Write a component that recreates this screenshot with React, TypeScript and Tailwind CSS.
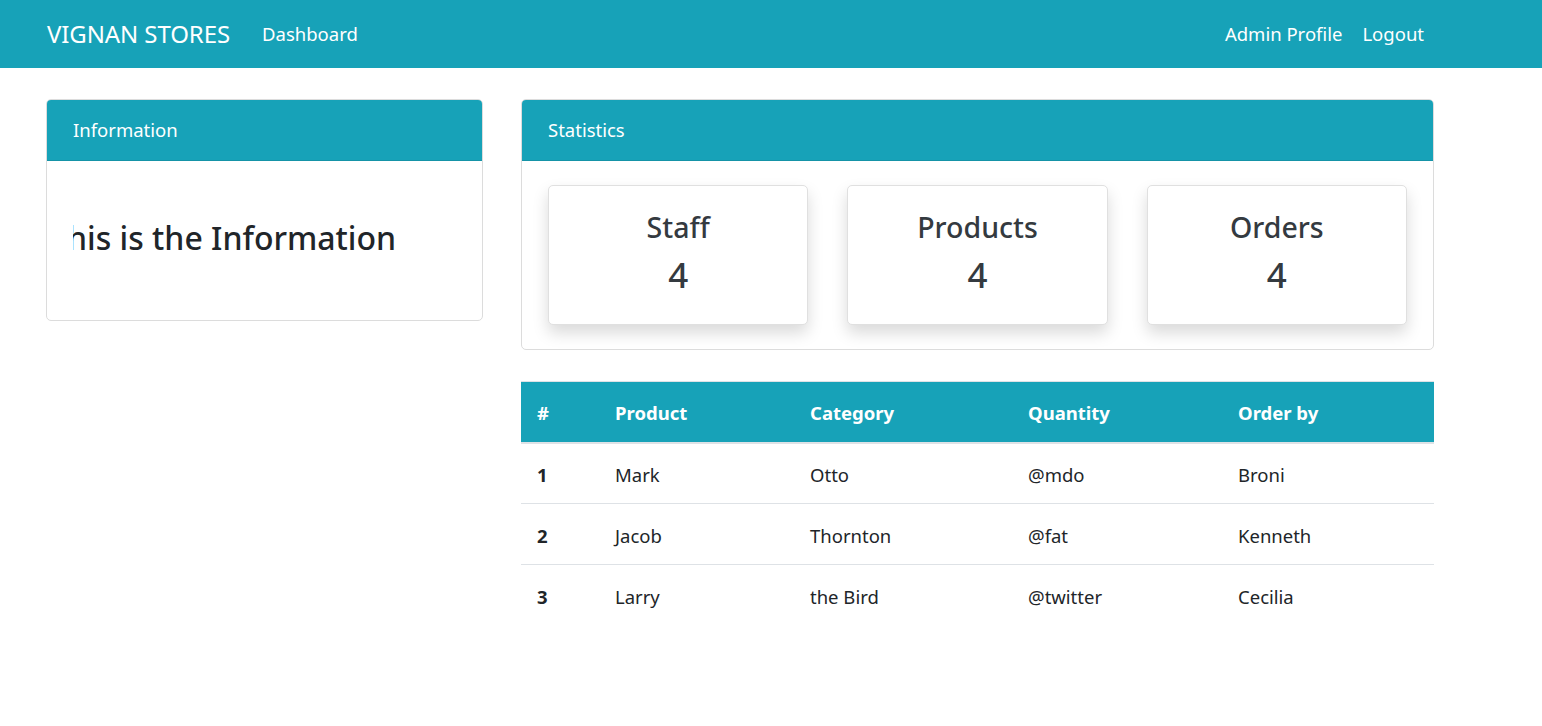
const FONT = "font-['Noto_Sans','Open_Sans',sans-serif]";

const stats = [
  { title: "Staff", value: 4 },
  { title: "Products", value: 4 },
  { title: "Orders", value: 4 },
];

const rows = [
  { id: 1, product: "Mark", category: "Otto", quantity: "@mdo", orderBy: "Broni" },
  { id: 2, product: "Jacob", category: "Thornton", quantity: "@fat", orderBy: "Kenneth" },
  { id: 3, product: "Larry", category: "the Bird", quantity: "@twitter", orderBy: "Cecilia" },
];

function Navbar() {
  return (
    <nav className="flex h-[68px] items-center justify-between bg-[#17a2b8] pl-[47px] pr-[118px] text-white">
      <div className="flex items-center">
        <a href="#" className="mr-[32px] text-[24px] tracking-[-0.1px]">
          VIGNAN STORES
        </a>
        <a href="#" className="text-[18.5px]">
          Dashboard
        </a>
      </div>
      <ul className="flex items-center gap-[20px] text-[18.5px]">
        <li>
          <a href="#">Admin Profile</a>
        </li>
        <li>
          <a href="#">Logout</a>
        </li>
      </ul>
    </nav>
  );
}

function CardHeader({ title }: { title: string }) {
  return (
    <div className="flex h-[61px] items-center rounded-t-[4px] border-b border-[#1593a7] bg-[#17a2b8] px-[26px] text-[18.5px] text-white">
      {title}
    </div>
  );
}

export default function App() {
  return (
    <div className={`${FONT} min-h-screen bg-white text-[#212529]`}>
      <Navbar />
      <main className="flex items-start gap-[38px] pl-[46px] pt-[31px]">
        <section className="w-[437px] rounded-[5px] border border-[#dcdcdc]">
          <CardHeader title="Information" />
          <div className="flex h-[159px] items-center px-[26px] pb-[6px]">
            <div className="w-full overflow-hidden">
              <h2 className="ml-[-24px] whitespace-nowrap text-[32px] font-medium leading-none text-[#212529]">
                This is the Information
              </h2>
            </div>
          </div>
        </section>

        <div className="flex w-[913px] flex-col gap-[31px]">
          <section className="rounded-[5px] border border-[#dcdcdc]">
            <CardHeader title="Statistics" />
            <div className="grid grid-cols-3 gap-[39px] px-[26px] py-[24px]">
              {stats.map((s) => (
                <div
                  key={s.title}
                  className="flex h-[140px] flex-col items-center justify-center rounded-[5px] border border-[#e0e0e0] bg-white pb-[4px] shadow-[0_8px_16px_rgba(0,0,0,0.15)]"
                >
                  <h3 className="text-[28.5px] font-medium leading-[1.2] text-[#343a40]">
                    {s.title}
                  </h3>
                  <div className="mt-[10px] text-[35px] font-medium leading-[1.2] text-[#343a40]">
                    {s.value}
                  </div>
                </div>
              ))}
            </div>
          </section>

          <table className="w-full border-collapse text-left text-[18.5px]">
            <thead>
              <tr className="h-[61px] border-t border-b-2 border-[#dee2e6] bg-[#17a2b8] text-white">
                <th className="w-[78px] px-[16px] pt-[2px] font-bold">#</th>
                <th className="w-[195px] px-[16px] pt-[2px] font-bold">Product</th>
                <th className="w-[218px] px-[16px] pt-[2px] font-bold">Category</th>
                <th className="w-[210px] px-[16px] pt-[2px] font-bold">Quantity</th>
                <th className="px-[16px] pt-[2px] font-bold">Order by</th>
              </tr>
            </thead>
            <tbody>
              {rows.map((r, i) => (
                <tr
                  key={r.id}
                  className={i < rows.length - 1 ? "h-[61px] border-b border-[#dee2e6]" : "h-[61px]"}
                >
                  <th className="px-[16px] pt-[3px] font-bold">{r.id}</th>
                  <td className="px-[16px] pt-[3px]">{r.product}</td>
                  <td className="px-[16px] pt-[3px]">{r.category}</td>
                  <td className="px-[16px] pt-[3px]">{r.quantity}</td>
                  <td className="px-[16px] pt-[3px]">{r.orderBy}</td>
                </tr>
              ))}
            </tbody>
          </table>
        </div>
      </main>
    </div>
  );
}
